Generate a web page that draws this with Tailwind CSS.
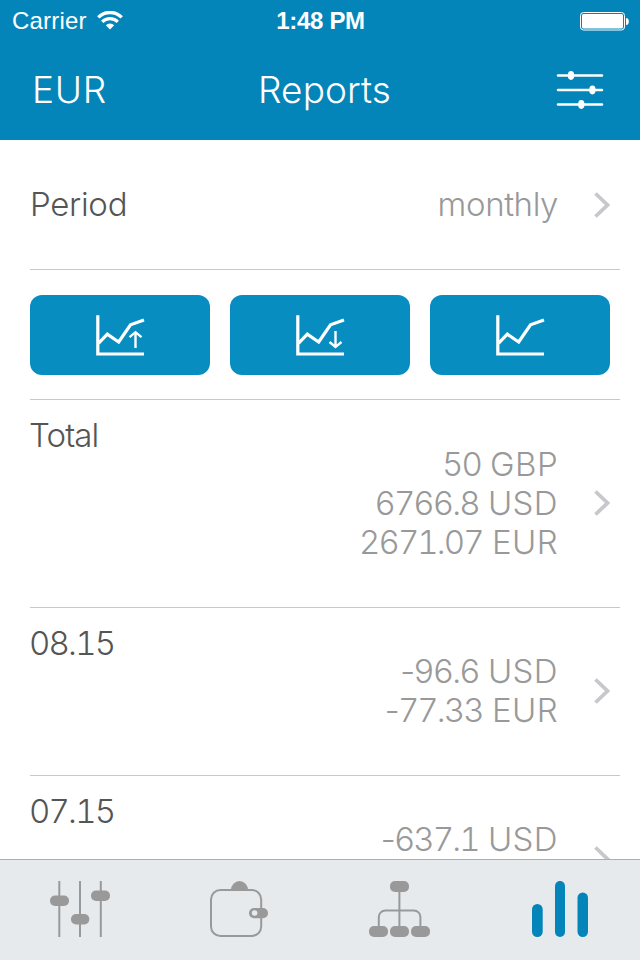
<!DOCTYPE html>
<html lang="en">
<head>
    <meta charset="UTF-8">
    <meta name="viewport" content="width=device-width, initial-scale=1.0">
    <title>Reports</title>
    <script src="https://cdn.jsdelivr.net/npm/@tailwindcss/browser@4"></script>
</head>
<body class="bg-white font-['Inter','Liberation_Sans',sans-serif] font-light w-[640px] h-[960px] overflow-hidden flex flex-col">

    <!-- Header -->
    <header class="h-[140px] shrink-0 bg-[#0385ba] text-white">
        <!-- Status bar -->
        <div class="h-10 grid grid-cols-3 items-center pl-3 pr-[11px] font-['Liberation_Sans',sans-serif]">
            <div class="flex items-center gap-[10px]">
                <span class="text-[24px] leading-10 font-normal tracking-[0.2px] pt-px">Carrier</span>
                <svg class="w-[26px] h-5" viewBox="0 0 26 20" fill="none" stroke="#fff">
                    <path d="M1.3 6.4a16.5 16.5 0 0 1 23.4 0" stroke-width="3.4"/>
                    <path d="M5.2 10.9a11 11 0 0 1 15.6 0" stroke-width="3.2"/>
                    <path d="M13 18.5l-4.2-4.3a6 6 0 0 1 8.4 0z" fill="#fff" stroke="none"/>
                </svg>
            </div>
            <div class="text-center text-[24px] leading-10 font-bold tracking-[-0.3px] pt-px">1:48 PM</div>
            <div class="flex justify-end">
                <svg class="w-[50px] h-5" viewBox="0 0 50 20">
                    <rect x="1.5" y="1.5" width="44" height="17.5" rx="3" fill="none" stroke="#fff"/>
                    <rect x="3" y="3" width="41" height="14.5" rx="1.5" fill="#fff"/>
                    <path d="M47 7a2.8 3.5 0 0 1 0 7z" fill="#fff"/>
                </svg>
            </div>
        </div>
        <!-- Nav bar -->
        <div class="h-[100px] grid grid-cols-3 items-center pl-[32px] pr-[36px]">
            <div class="text-[37px] tracking-[0.8px]">EUR</div>
            <div class="text-center text-[37px] tracking-[0.1px] pl-[13px]">Reports</div>
            <div class="flex justify-end">
                <svg class="w-12 h-10" viewBox="0 0 48 40" stroke="#fff" stroke-width="2.6" stroke-linecap="round" fill="#fff">
                    <path d="M2 5.5h44M2 20h44M2 34.5h44"/>
                    <g stroke="none">
                        <ellipse cx="15" cy="5.5" rx="3.2" ry="4.4"/>
                        <ellipse cx="36.4" cy="20" rx="3.2" ry="4.4"/>
                        <ellipse cx="25.3" cy="34.5" rx="3.2" ry="4.4"/>
                    </g>
                </svg>
            </div>
        </div>
    </header>

    <!-- Report list -->
    <main class="flex-1 min-h-0 overflow-hidden pl-[30px] pr-5 text-[33px] leading-[39px] text-[#555] tabular-nums">
        <div class="h-[130px] border-b border-[#c8c7cc] flex items-center pr-[10px]">
            <span class="tracking-[-0.3px]">Period</span>
            <span class="ml-auto text-[#999] tracking-[-0.4px]">monthly</span>
            <svg class="ml-9 w-4 h-[26px]" viewBox="0 0 16 26" fill="none" stroke="#c7c7cc" stroke-width="3.8"><path d="M1.5 1.5L13.5 13 1.5 24.5"/></svg>
        </div>

        <div class="h-[130px] border-b border-[#c8c7cc] flex items-center gap-5 pr-[10px]">
            <button class="w-[180px] h-20 rounded-xl bg-[#088dc1] flex items-center justify-center">
                <svg class="w-[50px] h-[42px]" viewBox="0 0 50 42" fill="none" stroke="#fff" stroke-width="3.2">
                    <path d="M2.8 1.2V40H49"/>
                    <path d="M3.5 29.3l8.8-9.2L23.7 28l11.8-17.2L49 5.9"/>
                    <path d="M40.5 34V18M34.5 23.2l6-5 6 5" stroke-width="2.4"/>
                </svg>
            </button>
            <button class="w-[180px] h-20 rounded-xl bg-[#088dc1] flex items-center justify-center">
                <svg class="w-[50px] h-[42px]" viewBox="0 0 50 42" fill="none" stroke="#fff" stroke-width="3.2">
                    <path d="M2.8 1.2V40H49"/>
                    <path d="M3.5 29.3l8.8-9.2L23.7 28l11.8-17.2L49 5.9"/>
                    <path d="M40.5 17v16M34.5 28l6 5 6-5" stroke-width="2.4"/>
                </svg>
            </button>
            <button class="w-[180px] h-20 rounded-xl bg-[#088dc1] flex items-center justify-center">
                <svg class="w-[50px] h-[42px]" viewBox="0 0 50 42" fill="none" stroke="#fff" stroke-width="3.2">
                    <path d="M2.8 1.2V40H49"/>
                    <path d="M3.5 29.3l8.8-9.2L23.7 28l11.8-17.2L49 5.9"/>
                </svg>
            </button>
        </div>

        <div class="h-[208px] border-b border-[#c8c7cc] flex items-center pr-[10px] pb-px">
            <span class="self-start pt-4 -ml-px tracking-[-0.9px]">Total</span>
            <div class="ml-auto text-right text-[#999] tracking-[0.4px]">
                <p><span class="tracking-[-1.9px]">50</span> GBP</p>
                <p><span class="tracking-[-1.9px]">6766.8</span> USD</p>
                <p><span class="tracking-[-1.9px]">2671.07</span> EUR</p>
            </div>
            <svg class="ml-9 w-4 h-[26px]" viewBox="0 0 16 26" fill="none" stroke="#c7c7cc" stroke-width="3.8"><path d="M1.5 1.5L13.5 13 1.5 24.5"/></svg>
        </div>

        <div class="h-[168px] border-b border-[#c8c7cc] flex items-center pr-[10px] pb-[2px]">
            <span class="self-start pt-4 -ml-px tracking-[-1.8px]">08.15</span>
            <div class="ml-auto text-right text-[#999] tracking-[0.4px]">
                <p><span class="tracking-[-1.9px]"><span class="normal-nums">-</span>96.6</span> USD</p>
                <p><span class="tracking-[-1.9px]"><span class="normal-nums">-</span>77.33</span> EUR</p>
            </div>
            <svg class="ml-9 w-4 h-[26px]" viewBox="0 0 16 26" fill="none" stroke="#c7c7cc" stroke-width="3.8"><path d="M1.5 1.5L13.5 13 1.5 24.5"/></svg>
        </div>

        <div class="h-[168px] flex items-center pr-[10px] pb-[3px]">
            <span class="self-start pt-4 -ml-px tracking-[-1.8px]">07.15</span>
            <div class="ml-auto text-right text-[#999] tracking-[0.4px]">
                <p><span class="tracking-[-1.9px]"><span class="normal-nums">-</span>637.1</span> USD</p>
                <p>&nbsp;</p>
            </div>
            <svg class="ml-9 w-4 h-[26px]" viewBox="0 0 16 26" fill="none" stroke="#c7c7cc" stroke-width="3.8"><path d="M1.5 1.5L13.5 13 1.5 24.5"/></svg>
        </div>
    </main>

    <!-- Tab bar -->
    <nav class="h-[101px] shrink-0 border-t border-[#acaeb0] bg-[#e6eaed] grid grid-cols-4 justify-items-center items-center pb-[2px]">
        <svg class="w-16 h-[60px]" viewBox="48 879 64 60" fill="#999">
            <path d="M59.3 881v56M80 881v56M100.8 881v56" stroke="#999" stroke-width="2"/>
            <rect x="50" y="895.5" width="19" height="10.5" rx="5"/>
            <rect x="71" y="914" width="18.3" height="10.5" rx="5"/>
            <rect x="91" y="890.5" width="19" height="10.5" rx="5"/>
        </svg>
        <svg class="w-16 h-[60px]" viewBox="208 879 64 60" fill="#999">
            <rect x="211" y="890" width="50.2" height="46" rx="9.5" fill="none" stroke="#999" stroke-width="2"/>
            <path d="M231 890a8.5 9 0 0 1 17 0z"/>
            <rect x="249" y="908" width="19" height="10.2" rx="5"/>
            <circle cx="254.6" cy="913" r="2.8" fill="#e6eaed"/>
        </svg>
        <svg class="w-16 h-[60px]" viewBox="368 879 64 60" fill="#999">
            <path d="M399.4 885v46M378.8 928v-11a6.5 6.5 0 0 1 6.5-6.5h28.6a6.5 6.5 0 0 1 6.5 6.5v11" fill="none" stroke="#999" stroke-width="2"/>
            <rect x="390" y="881" width="19" height="11" rx="5"/>
            <rect x="369" y="926" width="19" height="11" rx="5"/>
            <rect x="390" y="926" width="19" height="11" rx="5"/>
            <rect x="411" y="926" width="19" height="11" rx="5"/>
        </svg>
        <svg class="w-16 h-[60px]" viewBox="528 879 64 60" fill="#0385ba">
            <rect x="532" y="904" width="10.7" height="33" rx="5.3"/>
            <rect x="555" y="881" width="10" height="56" rx="5"/>
            <rect x="577.5" y="892.5" width="10.5" height="44.5" rx="5.2"/>
        </svg>
    </nav>
</body>
</html>
